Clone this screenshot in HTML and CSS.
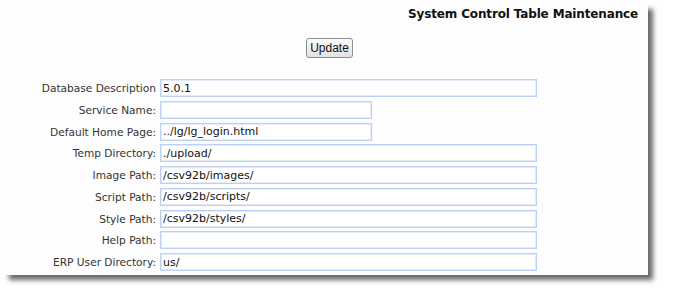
FILE: index.html
```html
<!DOCTYPE html>
<html>
<head>
<meta charset="utf-8">
<link rel="stylesheet" href="styles.css">
</head>
<body>
<div class="panel">
  <div class="title">System Control Table Maintenance</div>
  <div class="actions"><button class="btn" type="button">Update</button></div>
  <div class="form">
    <label class="lbl">Database Description</label><input class="fld long" value="5.0.1">
    <label class="lbl">Service Name:</label><input class="fld short" value="">
    <label class="lbl">Default Home Page:</label><input class="fld short" value="../lg/lg_login.html">
    <label class="lbl">Temp Directory:</label><input class="fld long" value="./upload/">
    <label class="lbl">Image Path:</label><input class="fld long" value="/csv92b/images/">
    <label class="lbl">Script Path:</label><input class="fld long" value="/csv92b/scripts/">
    <label class="lbl">Style Path:</label><input class="fld long" value="/csv92b/styles/">
    <label class="lbl">Help Path:</label><input class="fld long" value="">
    <label class="lbl">ERP User Directory:</label><input class="fld long" value="us/">
  </div>
</div>
</body>
</html>
```
FILE: styles.css
```css
html, body {
  margin: 0;
  padding: 0;
  background: #ffffff;
}
body {
  font-family: "DejaVu Sans", Verdana, sans-serif;
  color: #222;
  padding-bottom: 20px;
}
.panel {
  width: 648px;
  height: 275px;
  box-sizing: border-box;
  background: #fdfdfd;
  box-shadow: 7px 7px 5px -2px rgba(0, 0, 0, 0.6);
  padding-top: 6px;
}
.title {
  text-align: right;
  font-weight: bold;
  font-size: 12px;
  letter-spacing: -0.15px;
  line-height: 16px;
  padding-right: 10px;
  color: #111;
}
.actions {
  display: flex;
  justify-content: center;
  padding-left: 11px;
  margin-top: 16px;
}
.btn {
  font-family: "Liberation Sans", Arial, sans-serif;
  font-size: 12px;
  height: 20px;
  width: 47px;
  padding: 0;
  border: 1px solid #8c8c8c;
  border-radius: 3px;
  background: linear-gradient(#fbfbfb, #e2e2e2);
  color: #111;
}
.form {
  display: grid;
  grid-template-columns: 156px auto;
  column-gap: 4px;
  row-gap: 3.75px;
  margin-top: 21px;
  justify-items: start;
  align-items: center;
}
.lbl {
  justify-self: end;
  font-size: 10.6px;
  color: #333;
  white-space: nowrap;
}
.fld {
  box-sizing: border-box;
  height: 18px;
  border: 1px solid #bccff4;
  box-shadow: inset 0 0 0 1px #e3ebfb;
  background: #fff;
  font-family: "DejaVu Sans", Verdana, sans-serif;
  font-size: 11px;
  color: #111;
  padding: 0 2px;
  margin: 0;
  outline: none;
}
.long { width: 377px; }
.short { width: 212px; }
```
